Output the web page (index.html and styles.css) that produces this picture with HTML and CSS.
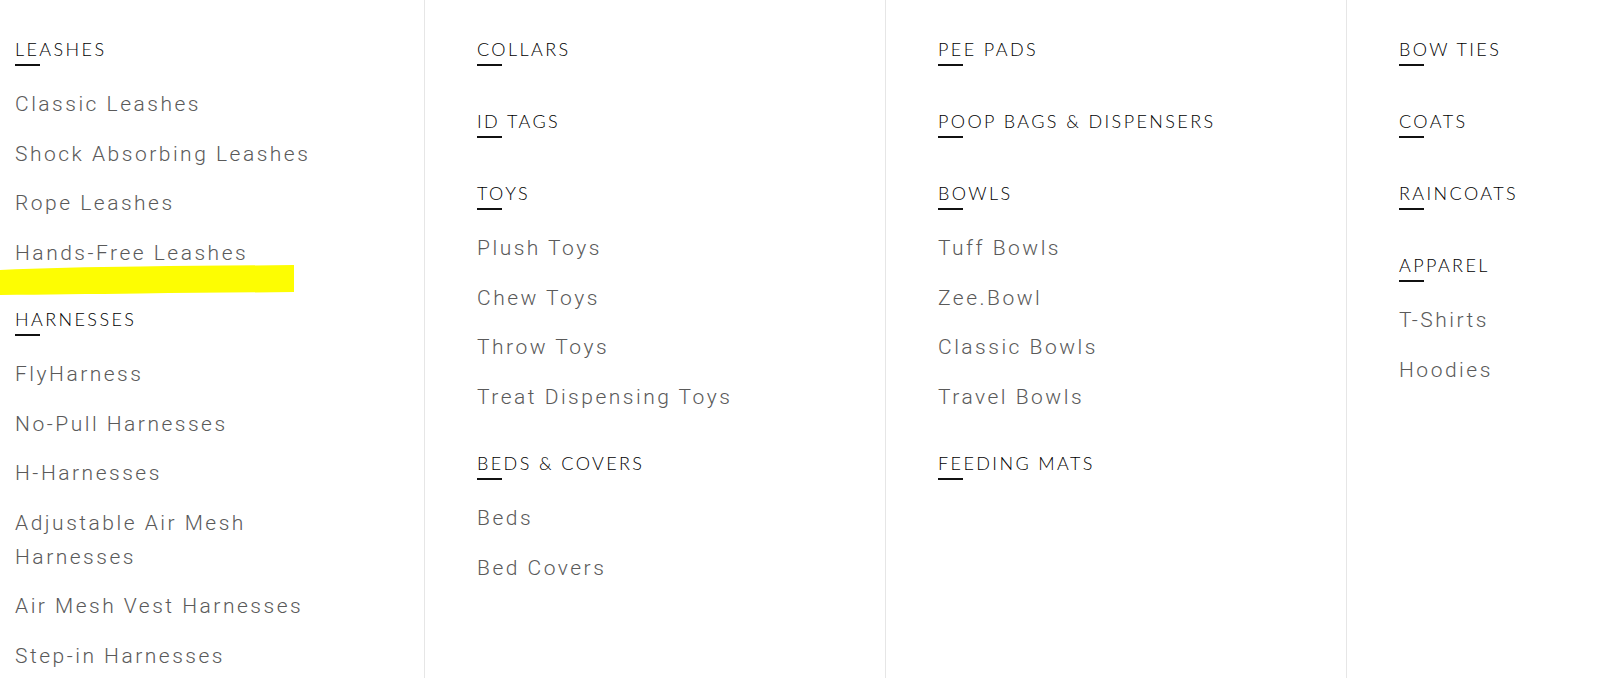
FILE: index.html
```html
<!DOCTYPE html>
<html lang="en">
<head>
<meta charset="utf-8">
<title>Menu</title>
<link rel="stylesheet" href="styles.css">
</head>
<body>
<div class="menu">
  <div class="col col-first">
    <div class="group">
      <h3 class="heading">LEASHES</h3>
      <ul class="items">
        <li>Classic Leashes</li>
        <li>Shock Absorbing Leashes</li>
        <li>Rope Leashes</li>
        <li>Hands-Free Leashes</li>
      </ul>
    </div>
    <div class="group">
      <h3 class="heading">HARNESSES</h3>
      <ul class="items">
        <li>FlyHarness</li>
        <li>No-Pull Harnesses</li>
        <li>H-Harnesses</li>
        <li>Adjustable Air Mesh Harnesses</li>
        <li>Air Mesh Vest Harnesses</li>
        <li>Step-in Harnesses</li>
      </ul>
    </div>
    <svg class="highlight" width="296" height="32" viewBox="0 0 296 32" aria-hidden="true">
      <path d="M0 5 C40 3 90 2 140 1.5 C190 1 240 0.5 294 0 L294 27 C240 27.5 190 28 140 28.5 C90 29 45 29.5 0 30 Z" fill="#fdfd02"/>
    </svg>
  </div>
  <div class="col">
    <div class="group">
      <h3 class="heading">COLLARS</h3>
    </div>
    <div class="group">
      <h3 class="heading">ID TAGS</h3>
    </div>
    <div class="group">
      <h3 class="heading">TOYS</h3>
      <ul class="items">
        <li>Plush Toys</li>
        <li>Chew Toys</li>
        <li>Throw Toys</li>
        <li>Treat Dispensing Toys</li>
      </ul>
    </div>
    <div class="group">
      <h3 class="heading">BEDS &amp; COVERS</h3>
      <ul class="items">
        <li>Beds</li>
        <li>Bed Covers</li>
      </ul>
    </div>
  </div>
  <div class="col">
    <div class="group">
      <h3 class="heading">PEE PADS</h3>
    </div>
    <div class="group">
      <h3 class="heading">POOP BAGS &amp; DISPENSERS</h3>
    </div>
    <div class="group">
      <h3 class="heading">BOWLS</h3>
      <ul class="items">
        <li>Tuff Bowls</li>
        <li>Zee.Bowl</li>
        <li>Classic Bowls</li>
        <li>Travel Bowls</li>
      </ul>
    </div>
    <div class="group">
      <h3 class="heading">FEEDING MATS</h3>
    </div>
  </div>
  <div class="col">
    <div class="group">
      <h3 class="heading">BOW TIES</h3>
    </div>
    <div class="group">
      <h3 class="heading">COATS</h3>
    </div>
    <div class="group">
      <h3 class="heading">RAINCOATS</h3>
    </div>
    <div class="group">
      <h3 class="heading">APPAREL</h3>
      <ul class="items">
        <li>T-Shirts</li>
        <li>Hoodies</li>
      </ul>
    </div>
  </div>
</div>
</body>
</html>
```

FILE: styles.css
```css
html, body {
  margin: 0;
  padding: 0;
  background: #ffffff;
}

body {
  width: 1600px;
  height: 678px;
  overflow: hidden;
}

.menu {
  display: grid;
  grid-template-columns: 424px 461px 461px 1fr;
  height: 678px;
}

.col {
  border-left: 1px solid #e6e6e6;
  padding: 37px 0 0 52px;
  box-sizing: border-box;
}

.col-first {
  position: relative;
  border-left: none;
  padding-left: 15px;
}

.group {
  display: flow-root;
  margin-bottom: 22px;
}

.heading {
  position: relative;
  margin: 0 0 26px 0;
  font-family: "Lato", "Liberation Sans", sans-serif;
  font-weight: 300;
  font-size: 18px;
  line-height: 24px;
  letter-spacing: 2.4px;
  color: #000000;
}

.heading::after {
  content: "";
  position: absolute;
  left: 0;
  top: 27px;
  width: 25px;
  height: 2px;
  background: #111111;
}

.items {
  list-style: none;
  margin: 0;
  padding: 0;
}

.items li {
  font-family: "Roboto", "Liberation Sans", sans-serif;
  font-weight: 300;
  font-size: 21px;
  line-height: 34px;
  letter-spacing: 2.5px;
  color: #5a5a5a;
  margin-bottom: 15.5px;
}

.col-first .items {
  width: 330px;
}

.highlight {
  position: absolute;
  left: 0;
  top: 265px;
}
```
